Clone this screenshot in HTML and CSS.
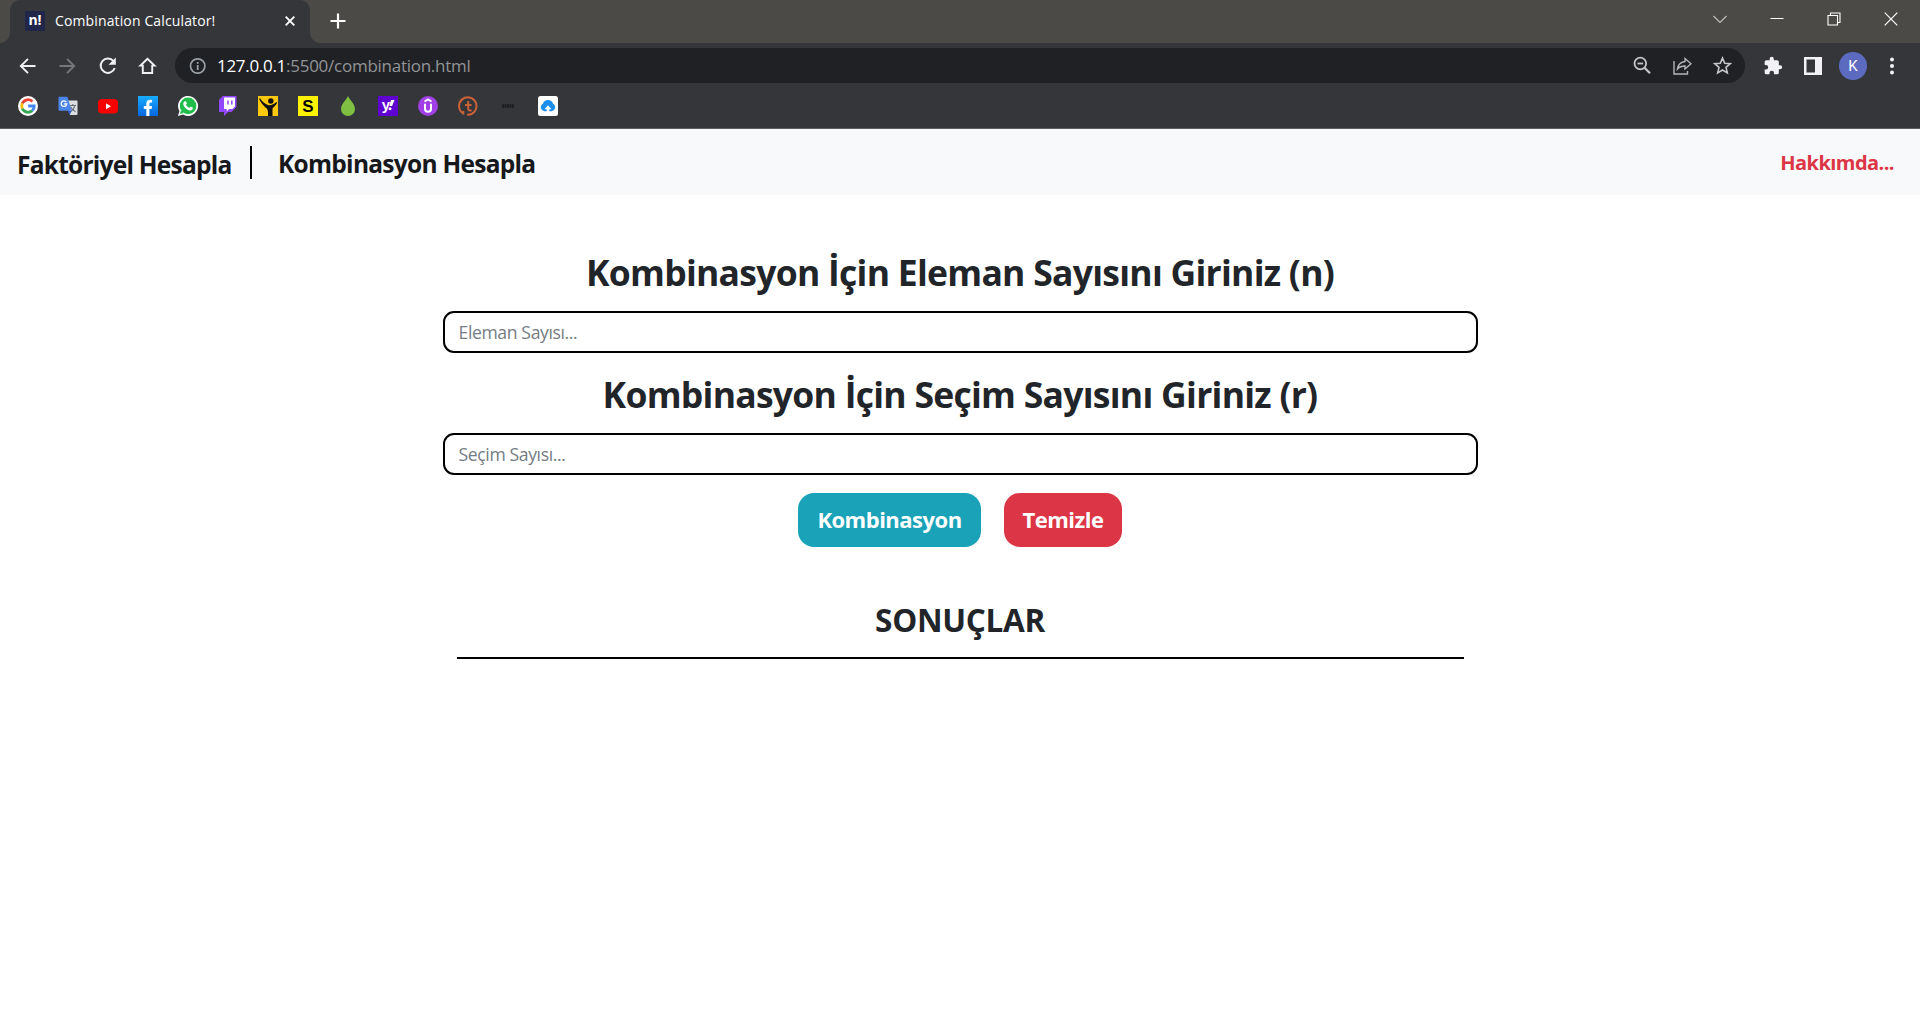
FILE: index.html
```html
<!DOCTYPE html>
<html lang="tr">
<head>
<meta charset="utf-8">
<title>Combination Calculator!</title>
<link rel="stylesheet" href="styles.css">
</head>
<body>
<header class="browser">
  <div class="tabstrip">
    <div class="tab">
      <span class="favicon">n!</span>
      <span class="tab-title">Combination Calculator!</span>
      <svg class="tab-close" width="10" height="10" viewBox="0 0 10 10"><path d="M.7.7l8.6 8.6M9.3.7L.7 9.3" stroke="#fff" stroke-width="1.9"/></svg>
    </div>
    <svg class="new-tab" width="16" height="16" viewBox="0 0 16 16"><path d="M8 .5v15M.5 8h15" stroke="#fff" stroke-width="2.2"/></svg>
    <div class="window-controls">
      <svg width="14" height="14" viewBox="0 0 14 14"><path d="M.5 4L7 10.5 13.500 4" fill="none" stroke="#c4c3c1" stroke-width="1.1"/></svg>
      <svg width="14" height="14" viewBox="0 0 14 14"><path d="M.5 6.500h13" stroke="#fff"/></svg>
      <svg width="14" height="14" viewBox="0 0 14 14"><path d="M1 3.500h9.500V13H1zM3.500 3.500V1h9.500v9.500h-2.500" fill="none" stroke="#fff" stroke-width="1.1"/></svg>
      <svg width="14" height="14" viewBox="0 0 14 14"><path d="M.7.7l12.600 12.600M13.300.7L.7 13.300" stroke="#fff" stroke-width="1.2"/></svg>
    </div>
  </div>

  <div class="toolbar">
    <div class="nav-icons">
      <svg width="20" height="20" viewBox="0 0 20 20"><path d="M17.500 10H3M10 2.800L2.800 10l7.200 7.200" fill="none" stroke="#f1f1f3" stroke-width="1.900"/></svg>
      <svg width="20" height="20" viewBox="0 0 20 20"><path d="M1.500 10H16M9 2.800l7.200 7.200L9 17.200" fill="none" stroke="#76777a" stroke-width="1.900"/></svg>
      <svg width="20" height="20" viewBox="0 0 20 20"><path d="M15.500 5.200A7.200 7.200 0 1 0 16.700 12" fill="none" stroke="#f1f1f3" stroke-width="2"/><path d="M17.800 1.500v7.300h-7.300z" fill="#f1f1f3"/></svg>
      <svg width="20" height="20" viewBox="0 0 20 20"><path d="M9.500 2.800l-7 6.800h2.300v7.400h9.400V9.600h2.300z" fill="none" stroke="#f1f1f3" stroke-width="1.900"/></svg>
    </div>
    <div class="address">
      <svg width="18" height="18" viewBox="0 0 18 18"><circle cx="8.700" cy="9" r="7.200" fill="none" stroke="#9aa0a6" stroke-width="1.700"/><path d="M8.700 8v5M8.700 5v1.800" stroke="#9aa0a6" stroke-width="1.800"/></svg>
      <span class="url"><span class="host">127.0.0.1</span><span class="path">:5500/combination.html</span></span>
      <div class="address-actions">
        <svg width="20" height="20" viewBox="0 0 20 20"><g fill="none" stroke="#c3c4c6" stroke-width="1.800"><circle cx="8.300" cy="7.500" r="5.800"/><path d="M5.500 7.500h5.600"/><path d="M12.500 11.700l5.500 5.500" stroke-width="2.300"/></g></svg>
        <svg width="20" height="20" viewBox="0 0 20 20"><g fill="none" stroke="#b4b5b7" stroke-width="1.400"><path d="M2 5v13h13.500v-3"/><path d="M13 2.500L19 7.800 13 13v-3c-3.600 0-5.800 1-7.500 3 .6-4 3-7 7.500-7.500z"/></g></svg>
        <svg width="20" height="20" viewBox="0 0 20 20"><path d="M10.500 2l2.200 5.200 5.600.5-4.300 3.700 1.300 5.500-4.800-2.900-4.800 2.900L7 11.400 2.700 7.700l5.600-.5z" fill="none" stroke="#c6c7c9" stroke-width="1.600"/></svg>
      </div>
    </div>
    <div class="toolbar-actions">
      <svg width="20" height="20" viewBox="0 0 24 24"><path fill="#f1f1f6" d="M20.500 11H19V7a2 2 0 0 0-2-2h-4V3.500a2.500 2.500 0 0 0-5 0V5H4a2 2 0 0 0-2 2v3.800h1.500a2.700 2.700 0 0 1 0 5.400H2V20a2 2 0 0 0 2 2h3.800v-1.500a2.700 2.700 0 0 1 5.400 0V22H17a2 2 0 0 0 2-2v-4h1.500a2.500 2.500 0 0 0 0-5z"/></svg>
      <svg width="18" height="18" viewBox="0 0 18 18"><path fill="#f1f1f6" fill-rule="evenodd" d="M0 0h18v18H0zM2.500 2.500v13H11v-13z"/></svg>
      <span class="avatar">K</span>
      <svg width="6" height="18" viewBox="0 0 6 18"><g fill="#f1f1f6"><circle cx="3" cy="2.500" r="2"/><circle cx="3" cy="9" r="2"/><circle cx="3" cy="15.500" r="2"/></g></svg>
    </div>
  </div>

  <nav class="bookmarks">
    <svg viewBox="0 0 20 20"><circle cx="10" cy="10" r="10" fill="#fff"/><g fill="none" stroke-width="2.800"><path d="M4.300 7.300A6.300 6.300 0 0 1 14.400 5.500" stroke="#ea4335"/><path d="M4.300 7.300a6.500 6.500 0 0 0 0 5.400" stroke="#fbbc05"/><path d="M4.300 12.700a6.300 6.300 0 0 0 9.900 1.900" stroke="#34a853"/><path d="M14.200 14.600A6 6 0 0 0 16.200 10H10.200" stroke="#4285f4"/></g></svg>
    <svg viewBox="0 0 20 20"><path d="M8 4.500h10.500a1 1 0 0 1 1 1V18a1 1 0 0 1-1 1H12z" fill="#dcdde0"/><path d="M11.500 9.500h6.500M14.800 8v1.500M16.800 9.500c-.4 2.500-2 4.500-4 5.700M12.800 11c.8 2 2.500 3.600 4.800 4.700" fill="none" stroke="#687078" stroke-width="1.100"/><path d="M9.500 14.500h4.200L11.800 19z" fill="#3457c0"/><path d="M1.500.8h7.800l4.500 13.900H1.500a1 1 0 0 1-1-1V1.800a1 1 0 0 1 1-1z" fill="#4c86e8"/><path d="M8.300 6A2.800 2.800 0 1 0 8.800 8H6.200" fill="none" stroke="#fff" stroke-width="1.300"/></svg>
    <svg viewBox="0 0 20 20"><rect y="3" width="20" height="14.500" rx="4" fill="#f60000"/><path d="M8 7.200v6l5-3z" fill="#fff"/></svg>
    <svg viewBox="0 0 20 20"><defs><linearGradient id="fb" x2="0" y2="1"><stop stop-color="#18acfe"/><stop offset="1" stop-color="#0866e0"/></linearGradient></defs><path fill="url(#fb)" d="M0 0h20v20H0z"/><path fill="#fff" d="M8.300 20v-7H5.800v-3h2.500V7.800c0-2.600 1.500-4 3.800-4 1 0 2 .2 2 .2v2.500h-1.200c-1.200 0-1.500.8-1.500 1.500v2h2.700l-.5 3h-2.200v7z"/></svg>
    <svg viewBox="0 0 20 20"><path d="M0 20l1.400-5A10 10 0 1 1 5 18.600z" fill="#fff"/><circle cx="10.100" cy="9.900" r="8.300" fill="#20bd4b"/><path d="M1.900 18.100l1-3.800 2.700 2.800z" fill="#20bd4b"/><path d="M6.800 5.200h1.100l1 2.300-.9 1.300c.8 1.500 1.800 2.400 3.300 3.100l1.200-1.300 2.400 1.200c0 1.700-1.500 2.700-2.900 2.600-3-.3-6.500-3.500-6.700-6.500 0-1.200.6-2.200 1.500-2.700z" fill="#fff"/></svg>
    <svg viewBox="0 0 20 20"><path d="M4.500 0h14v11l-5 5h-3.500L6 20v-4H1V4z" fill="#9147ff"/><path d="M6 1.500h11v8.700L14.500 13h-3.300L8.700 15.500V13H6z" fill="#fff"/><path d="M10 4.500v4M13.800 4.500v4" stroke="#9147ff" stroke-width="1.500"/></svg>
    <svg viewBox="0 0 20 20"><path fill="#fec80b" d="M0 0h20v20H0z"/><circle cx="12.800" cy="5" r="2.700" fill="#111"/><path d="M2 2.200c2 3.300 4.800 5.800 8.500 7 3 .3 5.500-1 8-3.200l.7.700c-1.600 2.800-3.700 4.300-4.700 5.800V20H10c.2-4 0-5.800-1.200-7.500C5.500 10 3 7 1 2.800z" fill="#111"/></svg>
    <svg viewBox="0 0 20 20"><path fill="#fff200" d="M0 0h20v20H0z"/><text x="10" y="16.200" class="icon-s">S</text></svg>
    <svg viewBox="0 0 20 20"><path d="M10 0c1.200 3.500 7 8 7 13a7 7 0 0 1-14 0C3 8 8.800 3.500 10 0z" fill="#7fc043"/></svg>
    <svg viewBox="0 0 20 20"><path fill="#5f01d1" d="M0 0h20v20H0z"/><text x="8" y="13.500" class="icon-y">y</text><path d="M13 4h3.500l-2.400 6h-2.700z" fill="#fff"/><circle cx="12" cy="12.800" r="1.500" fill="#fff"/></svg>
    <svg viewBox="0 0 20 20"><circle cx="10" cy="10" r="10" fill="#a13fe4"/><path d="M6.500 5.500L10 3.500l3.500 2M7 7.800v5a3 3 0 0 0 6 0v-5" fill="none" stroke="#fff" stroke-width="2"/></svg>
    <svg viewBox="0 0 20 20"><g fill="none" stroke="#cb6238" stroke-width="2"><path d="M5.300 17.500A8.700 8.700 0 1 1 9 18.700"/><path d="M5.300 18.500V15"/><path d="M10.200 5v7.500c0 2 1.500 2.500 3.300 1.800M7 9h6.500"/></g></svg>
    <svg viewBox="0 0 20 20"><path d="M5 8.300v3.500M7.500 8.300v3.500M10 8.300v3.500M12.500 8.300v3.500M15 8.300v3.500" stroke="#191a1d" stroke-width="1.800"/></svg>
    <svg viewBox="0 0 20 20"><rect width="20" height="20" rx="2.500" fill="#fff"/><path d="M6.300 15.200A4 4 0 0 1 5 7.700a5.200 5.200 0 0 1 10 0 4 4 0 0 1-1.300 7.500h-2.400v-2h2.200L10 9.200l-3.500 4h2.200v2z" fill="#1c8eee"/></svg>
  </nav>
</header>

<nav class="navbar">
  <a class="nav-link first">Faktöriyel Hesapla</a>
  <a class="nav-link">Kombinasyon Hesapla</a>
  <a class="about">Hakkımda...</a>
</nav>

<main class="calculator">
  <h1 class="question">Kombinasyon İçin Eleman Sayısını Giriniz (n)</h1>
  <input class="field" type="text" placeholder="Eleman Sayısı...">
  <h1 class="question">Kombinasyon İçin Seçim Sayısını Giriniz (r)</h1>
  <input class="field" type="text" placeholder="Seçim Sayısı...">
  <div class="buttons">
    <button class="btn btn-info">Kombinasyon</button>
    <button class="btn btn-danger">Temizle</button>
  </div>
  <h2 class="results">SONUÇLAR</h2>
</main>
</body>
</html>
```
FILE: styles.css
```css
* { box-sizing: border-box; }

body {
  margin: 0;
  background: #fff;
  color: #212529;
  font-family: "Open Sans", "Noto Sans", sans-serif;
}

svg { display: block; flex: none; }

/* Browser window */
.browser {
  height: 129px;
  background: #35363a;
  border-bottom: 1px solid #5c5d60;
}

.tabstrip {
  display: flex;
  align-items: flex-start;
  height: 43px;
  padding-left: 10px;
  background: #4b4a47;
}

.tab {
  position: relative;
  display: flex;
  align-items: center;
  width: 300px;
  height: 43px;
  padding: 0 15px 1px;
  border-radius: 10px 10px 0 0;
  background: #35363a;
}

.tab::before,
.tab::after {
  content: "";
  position: absolute;
  bottom: 0;
  width: 10px;
  height: 10px;
}

.tab::before {
  left: -10px;
  background: radial-gradient(circle at 0 0, #4b4a47 9.500px, #35363a 10px);
}

.tab::after {
  right: -10px;
  background: radial-gradient(circle at 100% 0, #4b4a47 9.500px, #35363a 10px);
}

.favicon {
  width: 20px;
  height: 20px;
  background: #20254a;
  color: #fff;
  font-size: 14px;
  font-weight: 700;
  line-height: 18px;
  text-align: center;
}

.tab-title {
  margin-left: 10px;
  color: #fff;
  font-size: 14px;
  line-height: 20px;
  padding-bottom: 1px;
  letter-spacing: 0.13px;
  white-space: nowrap;
}

.tab-close { margin-left: auto; }

.new-tab { margin: 13px 0 0 20px; }

.window-controls {
  display: flex;
  gap: 43px;
  margin: 12px 22px 0 auto;
}

.toolbar {
  display: flex;
  align-items: center;
  height: 44px;
  padding: 1px 0 0 18px;
}

.nav-icons {
  display: flex;
  gap: 20px;
  width: 157px;
}

.address {
  display: flex;
  align-items: center;
  width: 1570px;
  height: 35px;
  padding: 0 13px 0 14px;
  border-radius: 18px;
  background: #202124;
}

.url {
  margin-left: 10px;
  padding-bottom: 1px;
  font-size: 17px;
  white-space: nowrap;
}

.host { color: #fff; letter-spacing: -0.3px; }
.path { color: #929497; letter-spacing: -0.26px; }

.address-actions {
  display: flex;
  gap: 20px;
  margin-left: auto;
}

.toolbar-actions {
  display: flex;
  align-items: center;
  margin-left: 18px;
}

.toolbar-actions svg:nth-child(2) { margin-left: 21px; }

.avatar {
  width: 28px;
  height: 28px;
  margin: 0 22px 0 17px;
  border-radius: 50%;
  background: #5c6bc0;
  color: #fff;
  font: 15px/28px Roboto, sans-serif;
  text-align: center;
}

.bookmarks {
  display: flex;
  gap: 20px;
  padding: 9px 18px;
}

.bookmarks svg { width: 20px; height: 20px; }

.icon-s {
  font: 700 17px "Liberation Sans", sans-serif;
  text-anchor: middle;
}

.icon-y {
  fill: #fff;
  font: 700 15px "Liberation Sans", sans-serif;
  text-anchor: middle;
}

/* Page */
.navbar {
  display: flex;
  align-items: center;
  height: 66px;
  padding: 0 26px 0 17px;
  background: #f8f9fa;
}

.nav-link {
  padding-top: 2px;
  color: #16181b;
  font-size: 24.500px;
  font-weight: 700;
  line-height: 33px;
  letter-spacing: -0.72px;
}

.first {
  width: 235px;
  height: 33px;
  margin-right: 26px;
  border-right: 2px solid #000;
  letter-spacing: -0.75px;
}

.about {
  margin-left: auto;
  color: #dc3545;
  font-size: 20px;
  font-weight: 700;
  letter-spacing: -0.55px;
}

.calculator {
  display: flex;
  flex-direction: column;
  gap: 18px;
  width: 1035px;
  margin: 0 auto;
  padding-top: 54px;
}

.question {
  height: 44px;
  margin: 0;
  font-size: 35.500px;
  font-weight: 700;
  line-height: 46px;
  letter-spacing: -0.73px;
  text-align: center;
}

.field {
  width: 100%;
  height: 42px;
  padding: 0 14px;
  border: 2px solid #000;
  border-radius: 11px;
  background: #fff;
  font-family: inherit;
  font-size: 17.600px;
  letter-spacing: -0.38px;
}

.field::placeholder { color: #757c83; }

.buttons {
  display: flex;
  justify-content: center;
  gap: 23px;
}

.btn {
  height: 54px;
  padding: 0 0 3px;
  border: 0;
  border-radius: 16px;
  color: #fff;
  font-family: inherit;
  font-size: 22px;
  font-weight: 700;
  letter-spacing: -0.5px;
}

.btn-info { width: 183px; background: #1aa2b8; }
.btn-danger { width: 118px; background: #dc3545; }

.results {
  margin: 35px 14px 0;
  padding-bottom: 17px;
  border-bottom: 2px solid #000;
  font-size: 31.500px;
  font-weight: 700;
  line-height: 40px;
  letter-spacing: -0.3px;
  text-align: center;
}
```
